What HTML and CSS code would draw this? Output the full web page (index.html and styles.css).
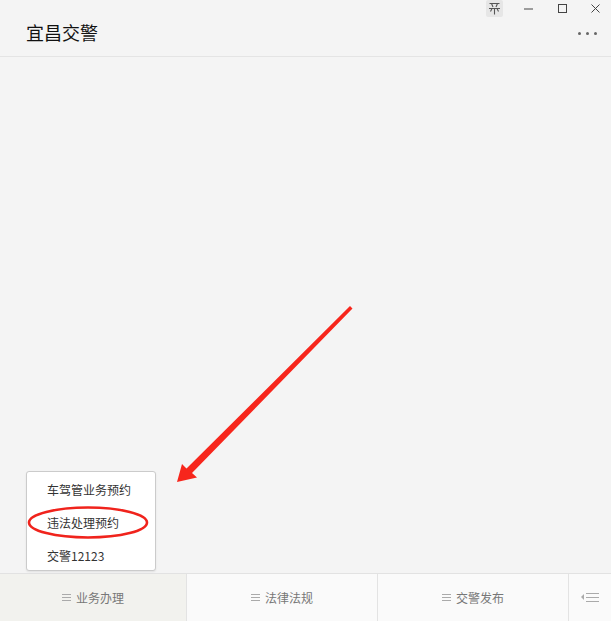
FILE: index.html
```html
<!DOCTYPE html>
<html lang="zh">
<head>
<meta charset="utf-8">
<title>宜昌交警</title>
<link rel="stylesheet" href="styles.css">
</head>
<body>
<div class="app">
  <header class="header">
    <h1 class="title">宜昌交警</h1>
    <div class="more"><span></span><span></span><span></span></div>
    <div class="winctl">
      <div class="wbtn pin">
        <svg width="13" height="13" viewBox="0 0 13 13"><path d="M1.5 1.5h10M3.5 1.5l1.5 3.5M9.5 1.5L8 5M1 6.5h11M4 6.5L2.5 9.5M9 6.5l1.5 3M6.5 6.5v6" stroke="#555" stroke-width="1.1" fill="none"/></svg>
      </div>
      <div class="wbtn">
        <svg width="11" height="11" viewBox="0 0 11 11"><path d="M1 6h9" stroke="#444" stroke-width="1"/></svg>
      </div>
      <div class="wbtn">
        <svg width="11" height="11" viewBox="0 0 11 11"><rect x="1.5" y="1.5" width="8" height="8" stroke="#444" stroke-width="1" fill="none"/></svg>
      </div>
      <div class="wbtn last">
        <svg width="11" height="11" viewBox="0 0 11 11"><path d="M1.5 1.5l8 8M9.5 1.5l-8 8" stroke="#444" stroke-width="1"/></svg>
      </div>
    </div>
  </header>
  <main class="content">
    <div class="popup">
      <div class="pitem">车驾管业务预约</div>
      <div class="pitem">违法处理预约</div>
      <div class="pitem">交警12123</div>
    </div>
    <svg class="annot" width="611" height="516" viewBox="0 57 611 516">
      <ellipse cx="88" cy="522.5" rx="59" ry="15" fill="none" stroke="#f0231c" stroke-width="2.6"/>
      <polygon points="350,306 352.5,308.5 192,473 197,477.5 177,482 182,464 186.5,468.5" fill="#f7261c"/>
    </svg>
  </main>
  <nav class="tabbar">
    <div class="tab active"><span class="ham"><i></i><i></i><i></i></span>业务办理</div>
    <div class="tab"><span class="ham"><i></i><i></i><i></i></span>法律法规</div>
    <div class="tab"><span class="ham"><i></i><i></i><i></i></span>交警发布</div>
    <div class="tab kb"><span class="tri"></span><span class="ham big"><i></i><i></i><i></i></span></div>
  </nav>
</div>
</body>
</html>
```
FILE: styles.css
```css
* { box-sizing: border-box; }
html, body { margin: 0; padding: 0; }
body {
  background: #f4f4f4;
  font-family: "Noto Sans CJK SC", "Noto Sans", sans-serif;
  color: #222;
}
.app {
  width: 611px;
  height: 621px;
  display: flex;
  flex-direction: column;
  overflow: hidden;
}
.header {
  position: relative;
  height: 57px;
  flex: none;
  border-bottom: 1px solid #e4e4e4;
  display: flex;
  align-items: center;
  padding: 8px 14px 0 26px;
}
.title {
  margin: 0;
  font-size: 18px;
  font-weight: normal;
  color: #111;
  flex: 1;
}
.more {
  display: flex;
  gap: 5px;
  margin-top: 3px;
}
.more span {
  width: 3px;
  height: 3px;
  border-radius: 50%;
  background: #666;
}
.winctl {
  position: absolute;
  top: 0;
  right: 0;
  display: flex;
}
.wbtn {
  width: 34px;
  height: 17px;
  display: flex;
  align-items: center;
  justify-content: center;
}
.wbtn.last { width: 32px; }
.wbtn.pin {
  width: 17px;
  margin-right: 8px;
  background: #e6e6e6;
  border-radius: 2px;
}
.content {
  flex: 1;
  position: relative;
}
.popup {
  position: absolute;
  left: 26px;
  bottom: 2px;
  width: 130px;
  height: 100px;
  background: #fff;
  border: 1px solid #cbcbcb;
  border-radius: 3px;
  box-shadow: 0 1px 2px rgba(0,0,0,0.08);
  padding-top: 1px;
  display: flex;
  flex-direction: column;
}
.pitem {
  height: 33px;
  line-height: 33px;
  padding-left: 20px;
  font-size: 12px;
  color: #333;
}
.annot {
  position: absolute;
  left: 0;
  top: 0;
  pointer-events: none;
}
.tabbar {
  height: 48px;
  flex: none;
  border-top: 1px solid #e2e2e2;
  display: flex;
  background: #fafafa;
}
.tab {
  width: 191px;
  display: flex;
  align-items: center;
  justify-content: center;
  gap: 5px;
  font-size: 12px;
  color: #777;
  border-right: 1px solid #e3e3e3;
  padding-bottom: 1px;
}
.tab:first-child { width: 187px; }
.tab.active { background: #f2f2ee; }
.tab.kb {
  width: auto;
  flex: 1;
  border-right: none;
  gap: 2px;
}
.ham {
  width: 9px;
  display: flex;
  flex-direction: column;
  gap: 2px;
}
.ham i {
  display: block;
  height: 1px;
  background: #aaa;
}
.ham.big { width: 13px; gap: 3px; }
.tri {
  width: 0;
  height: 0;
  border-top: 3px solid transparent;
  border-bottom: 3px solid transparent;
  border-right: 3px solid #aaa;
}
```
